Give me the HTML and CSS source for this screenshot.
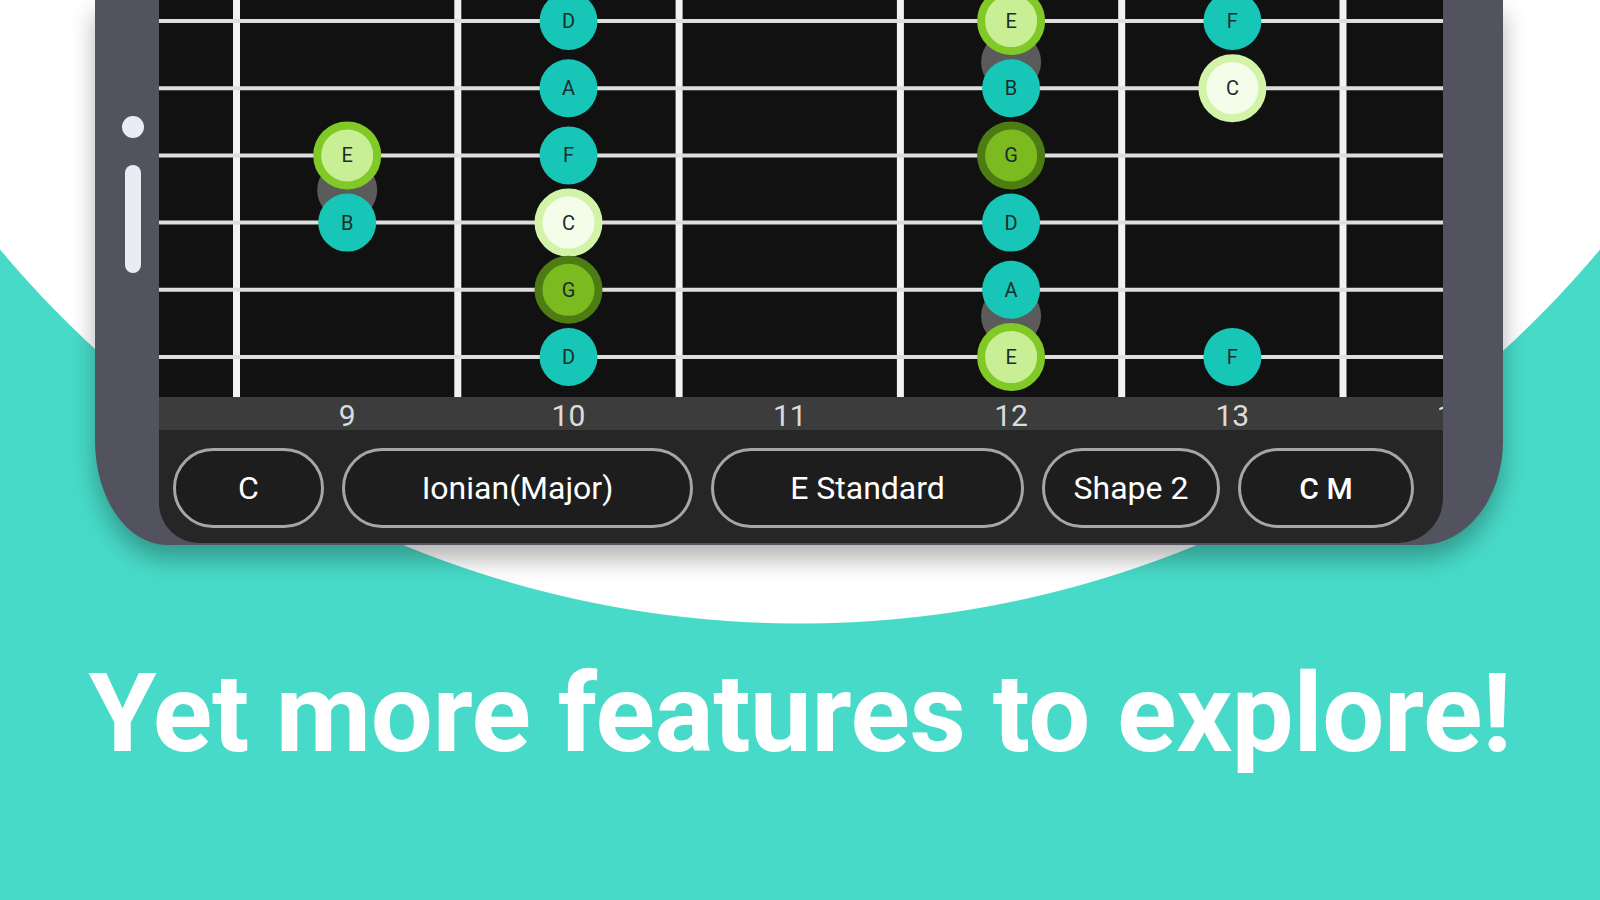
FILE: index.html
```html
<!DOCTYPE html>
<html lang="en">
<head>
<meta charset="UTF-8">
<meta name="viewport" content="width=device-width, initial-scale=1.0">
<title>Yet more features to explore!</title>
<link rel="stylesheet" href="styles.css">
</head>
<body>

<div class="phone">
    <div class="phone-side">
        <span class="camera"></span>
        <span class="speaker"></span>
    </div>

    <div class="screen">
        <!-- fretboard: frets 9 to 13 -->
        <svg class="fretboard" viewBox="0 0 1284 397" width="1284" height="397">
            <g class="frets">
                <line x1="77.5" y1="0" x2="77.5" y2="397"/>
                <line x1="298.8" y1="0" x2="298.8" y2="397"/>
                <line x1="520.1" y1="0" x2="520.1" y2="397"/>
                <line x1="741.4" y1="0" x2="741.4" y2="397"/>
                <line x1="962.7" y1="0" x2="962.7" y2="397"/>
                <line x1="1184" y1="0" x2="1184" y2="397"/>
            </g>
            <g class="strings">
                <line x1="0" y1="21" x2="1284" y2="21"/>
                <line x1="0" y1="88.2" x2="1284" y2="88.2"/>
                <line x1="0" y1="155.4" x2="1284" y2="155.4"/>
                <line x1="0" y1="222.6" x2="1284" y2="222.6"/>
                <line x1="0" y1="289.8" x2="1284" y2="289.8"/>
                <line x1="0" y1="357" x2="1284" y2="357"/>
            </g>

            <!-- ghost notes sit under the others -->
            <circle class="ghost" cx="188.2" cy="190" r="30"/>
            <circle class="ghost" cx="852.1" cy="62" r="30"/>
            <circle class="ghost" cx="852.1" cy="316" r="30"/>

            <!-- fret 9 -->
            <g class="note light" transform="translate(188.2 155.4)"><circle r="30"/><text dy="7">E</text></g>
            <g class="note teal" transform="translate(188.2 222.6)"><circle r="29"/><text dy="7">B</text></g>

            <!-- fret 10 -->
            <g class="note teal" transform="translate(409.5 21)"><circle r="29"/><text dy="7">D</text></g>
            <g class="note teal" transform="translate(409.5 88.2)"><circle r="29"/><text dy="7">A</text></g>
            <g class="note teal" transform="translate(409.5 155.4)"><circle r="29"/><text dy="7">F</text></g>
            <g class="note root" transform="translate(409.5 222.6)"><circle r="30"/><text dy="7">C</text></g>
            <g class="note dark" transform="translate(409.5 289.8)"><circle r="30"/><text dy="7">G</text></g>
            <g class="note teal" transform="translate(409.5 357)"><circle r="29"/><text dy="7">D</text></g>

            <!-- fret 12 -->
            <g class="note light" transform="translate(852.1 21)"><circle r="30"/><text dy="7">E</text></g>
            <g class="note teal" transform="translate(852.1 88.2)"><circle r="29"/><text dy="7">B</text></g>
            <g class="note dark" transform="translate(852.1 155.4)"><circle r="30"/><text dy="7">G</text></g>
            <g class="note teal" transform="translate(852.1 222.6)"><circle r="29"/><text dy="7">D</text></g>
            <g class="note teal" transform="translate(852.1 289.8)"><circle r="29"/><text dy="7">A</text></g>
            <g class="note light" transform="translate(852.1 357)"><circle r="30"/><text dy="7">E</text></g>

            <!-- fret 13 -->
            <g class="note teal" transform="translate(1073.4 21)"><circle r="29"/><text dy="7">F</text></g>
            <g class="note root" transform="translate(1073.4 88.2)"><circle r="30"/><text dy="7">C</text></g>
            <g class="note teal" transform="translate(1073.4 357)"><circle r="29"/><text dy="7">F</text></g>
        </svg>

        <div class="fret-numbers">
            <span>9</span>
            <span>10</span>
            <span>11</span>
            <span>12</span>
            <span>13</span>
            <span>14</span>
        </div>

        <div class="controls">
            <button type="button" class="chip chip-key">C</button>
            <button type="button" class="chip chip-scale">Ionian(Major)</button>
            <button type="button" class="chip chip-tuning">E Standard</button>
            <button type="button" class="chip chip-shape">Shape 2</button>
            <button type="button" class="chip chip-chord">C M</button>
        </div>
    </div>

    <div class="phone-side phone-side-right"></div>
</div>

<h1 class="headline">Yet more features to explore!</h1>

</body>
</html>
```

FILE: styles.css
```css
body {
    margin: 0;
    width: 1600px;
    height: 900px;
    overflow: hidden;
    font-family: Roboto, "Liberation Sans", sans-serif;
    background: radial-gradient(circle 1043px at 800px -419px, #ffffff 1042px, #48dac8 1043px);
}

/* phone frame */
.phone {
    display: flex;
    align-items: flex-start;
    width: 1408px;
    height: 545px;
    margin-left: 95px;
    background: #53535f;
    border-radius: 0 0 82px 72px / 0 0 104px 104px;
    box-shadow: 0 14px 24px rgba(0, 0, 0, 0.3);
}

.phone-side {
    display: flex;
    flex-direction: column;
    align-items: flex-start;
    width: 64px;
    flex: 0 0 64px;
    box-sizing: border-box;
    padding: 116px 0 0 27px;
}

.phone-side-right {
    width: 60px;
    flex: 0 0 60px;
    padding: 0;
}

.camera {
    width: 22px;
    height: 22px;
    border-radius: 50%;
    background: #ebebf4;
}

.speaker {
    width: 16px;
    height: 108px;
    margin: 27px 0 0 3px;
    border-radius: 8px;
    background: #ebebf4;
}

/* screen */
.screen {
    display: flex;
    flex-direction: column;
    width: 1284px;
    flex: 0 0 1284px;
    height: 543px;
    overflow: hidden;
    border-radius: 0 0 45px 40px;
    background: #262626;
}

.fretboard {
    display: block;
    background: #111111;
}

.frets line {
    stroke: #f2f2f2;
    stroke-width: 7;
}

.strings line {
    stroke: #dedede;
    stroke-width: 4;
}

.ghost {
    fill: #5b5b5b;
}

.note text {
    font-family: Roboto, "Liberation Sans", sans-serif;
    font-size: 20px;
    fill: #1b2d2b;
    text-anchor: middle;
}

.note.teal circle {
    fill: #17c6b6;
}

.note.light circle {
    fill: #c9ef96;
    stroke: #80c927;
    stroke-width: 8;
}

.note.root circle {
    fill: #f3fde9;
    stroke: #d3f3a8;
    stroke-width: 8;
}

.note.dark circle {
    fill: #7cbb20;
    stroke: #4d7d12;
    stroke-width: 8;
}

.fret-numbers {
    display: flex;
    height: 33px;
    padding-left: 77.5px;
    background: #3c3c3c;
    color: #dcdcdc;
    font-size: 30px;
    white-space: nowrap;
}

.fret-numbers span {
    flex: 0 0 221.3px;
    padding-top: 4px;
    line-height: 29px;
    text-align: center;
}

.controls {
    display: flex;
    align-items: flex-start;
    gap: 18px;
    height: 113px;
    box-sizing: border-box;
    padding: 18px 0 0 14px;
}

.chip {
    flex: 0 0 auto;
    height: 80px;
    padding: 0;
    border: 3px solid #a6a6a6;
    border-radius: 40px;
    background: #1d1d1d;
    color: #ffffff;
    font-family: Roboto, "Liberation Sans", sans-serif;
    font-size: 32px;
    box-sizing: border-box;
}

.chip-key { width: 151px; }
.chip-scale { width: 351px; }
.chip-tuning { width: 313px; }
.chip-shape { width: 178px; }
.chip-chord { width: 176px; font-size: 30px; font-weight: 500; }

.headline {
    margin: 114px 0 0;
    color: #ffffff;
    font-size: 110px;
    font-weight: 700;
    line-height: 110px;
    letter-spacing: -0.3px;
    text-align: center;
}
```
